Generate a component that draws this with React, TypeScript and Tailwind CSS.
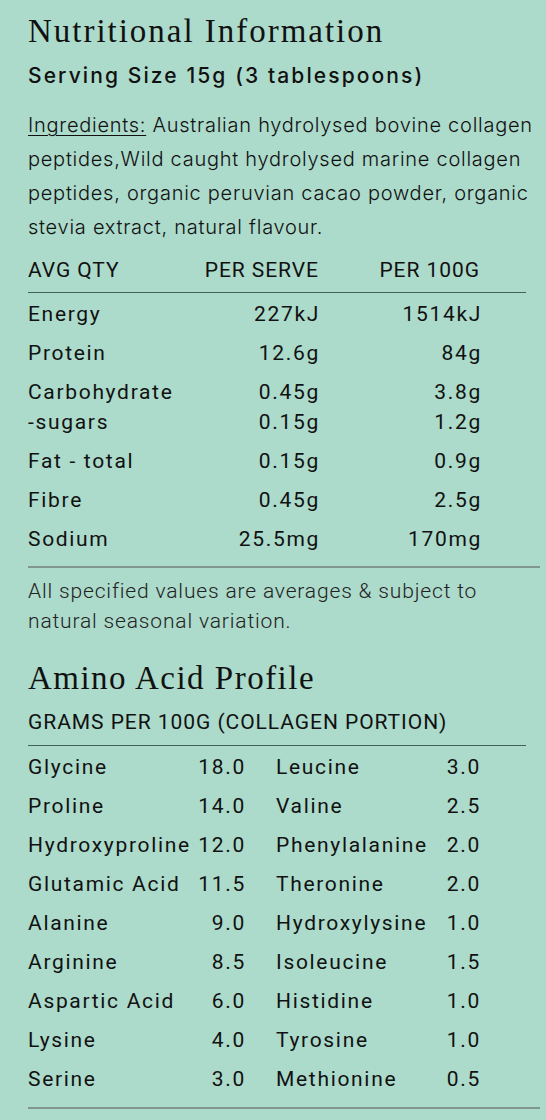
import React from "react";

const nutr = [
  { name: "Energy", a: "227kJ", b: "1514kJ", gap: "mt-[6px]" },
  { name: "Protein", a: "12.6g", b: "84g", gap: "mt-[9px]" },
  { name: "Carbohydrate", a: "0.45g", b: "3.8g", gap: "mt-[9px]" },
  { name: "-sugars", a: "0.15g", b: "1.2g", gap: "mt-0" },
  { name: "Fat - total", a: "0.15g", b: "0.9g", gap: "mt-[9px]" },
  { name: "Fibre", a: "0.45g", b: "2.5g", gap: "mt-[9px]" },
  { name: "Sodium", a: "25.5mg", b: "170mg", gap: "mt-[9px]" },
];

const amino: [string, string, string, string][] = [
  ["Glycine", "18.0", "Leucine", "3.0"],
  ["Proline", "14.0", "Valine", "2.5"],
  ["Hydroxyproline", "12.0", "Phenylalanine", "2.0"],
  ["Glutamic Acid", "11.5", "Theronine", "2.0"],
  ["Alanine", "9.0", "Hydroxylysine", "1.0"],
  ["Arginine", "8.5", "Isoleucine", "1.5"],
  ["Aspartic Acid", "6.0", "Histidine", "1.0"],
  ["Lysine", "4.0", "Tyrosine", "1.0"],
  ["Serine", "3.0", "Methionine", "0.5"],
];

const cond = "font-['Roboto',sans-serif] text-[21px]";

export default function App() {
  return (
    <div className="min-h-[1120px] w-[546px] bg-[#acdacb] text-[#111] pl-[28px] pr-[6px] pt-[11px]">
      <h1 className="font-['Liberation_Serif',serif] text-[33px] leading-[40px] tracking-[0.06em]">
        Nutritional Information
      </h1>
      <div className="font-['Inter',sans-serif] font-medium text-[21px] leading-[28px] tracking-[0.1em] mt-[11px] whitespace-nowrap">
        Serving Size 15g (3 tablespoons)
      </div>
      <p className="font-['Inter',sans-serif] font-light text-[20px] leading-[34px] tracking-[0.037em] mt-[18px] whitespace-nowrap">
        <span className="underline underline-offset-[3px] decoration-1">Ingredients:</span> Australian hydrolysed bovine collagen
        <br />
        peptides,Wild caught hydrolysed marine collagen
        <br />
        peptides, organic peruvian cacao powder, organic
        <br />
        stevia extract, natural flavour.
      </p>

      <div className={`${cond} w-[498px] mt-[12px]`}>
        <div className="flex leading-[28px] pb-[8px] border-b border-[#45605a] tracking-[0.045em]">
          <span className="w-[170px]">AVG QTY</span>
          <span className="w-[121px] text-right">PER SERVE</span>
          <span className="w-[161px] text-right">PER 100G</span>
        </div>
        <div className="pb-[12px] tracking-[0.08em]">
          {nutr.map((r) => (
            <div key={r.name} className={`flex leading-[30px] ${r.gap}`}>
              <span className="w-[170px]">{r.name}</span>
              <span className="w-[122px] text-right">{r.a}</span>
              <span className="w-[162px] text-right">{r.b}</span>
            </div>
          ))}
        </div>
      </div>
      <div className="border-t-2 border-[#7f978f]" />
      <p className={`${cond} font-light tracking-[0.04em] leading-[30px] mt-[8px] text-[#222]`}>
        All specified values are averages &amp; subject to
        <br />
        natural seasonal variation.
      </p>

      <h2 className="font-['Liberation_Serif',serif] text-[33px] leading-[40px] tracking-[0.045em] mt-[22px]">
        Amino Acid Profile
      </h2>
      <div className={`${cond} w-[498px]`}>
        <div className="leading-[28px] pt-[10px] pb-[9px] border-b border-[#45605a] tracking-[0.045em]">
          GRAMS PER 100G (COLLAGEN PORTION)
        </div>
        <div className="pb-[13px] tracking-[0.08em]">
          {amino.map((r, i) => (
            <div key={r[0]} className={`flex leading-[30px] ${i === 0 ? "mt-[6px]" : "mt-[9px]"}`}>
              <span className="w-[166px] whitespace-nowrap">{r[0]}</span>
              <span className="w-[52px] text-right">{r[1]}</span>
              <span className="w-[30px]" />
              <span className="w-[150px] whitespace-nowrap">{r[2]}</span>
              <span className="w-[55px] text-right">{r[3]}</span>
            </div>
          ))}
        </div>
      </div>
      <div className="border-t-2 border-[#7f978f]" />
    </div>
  );
}
